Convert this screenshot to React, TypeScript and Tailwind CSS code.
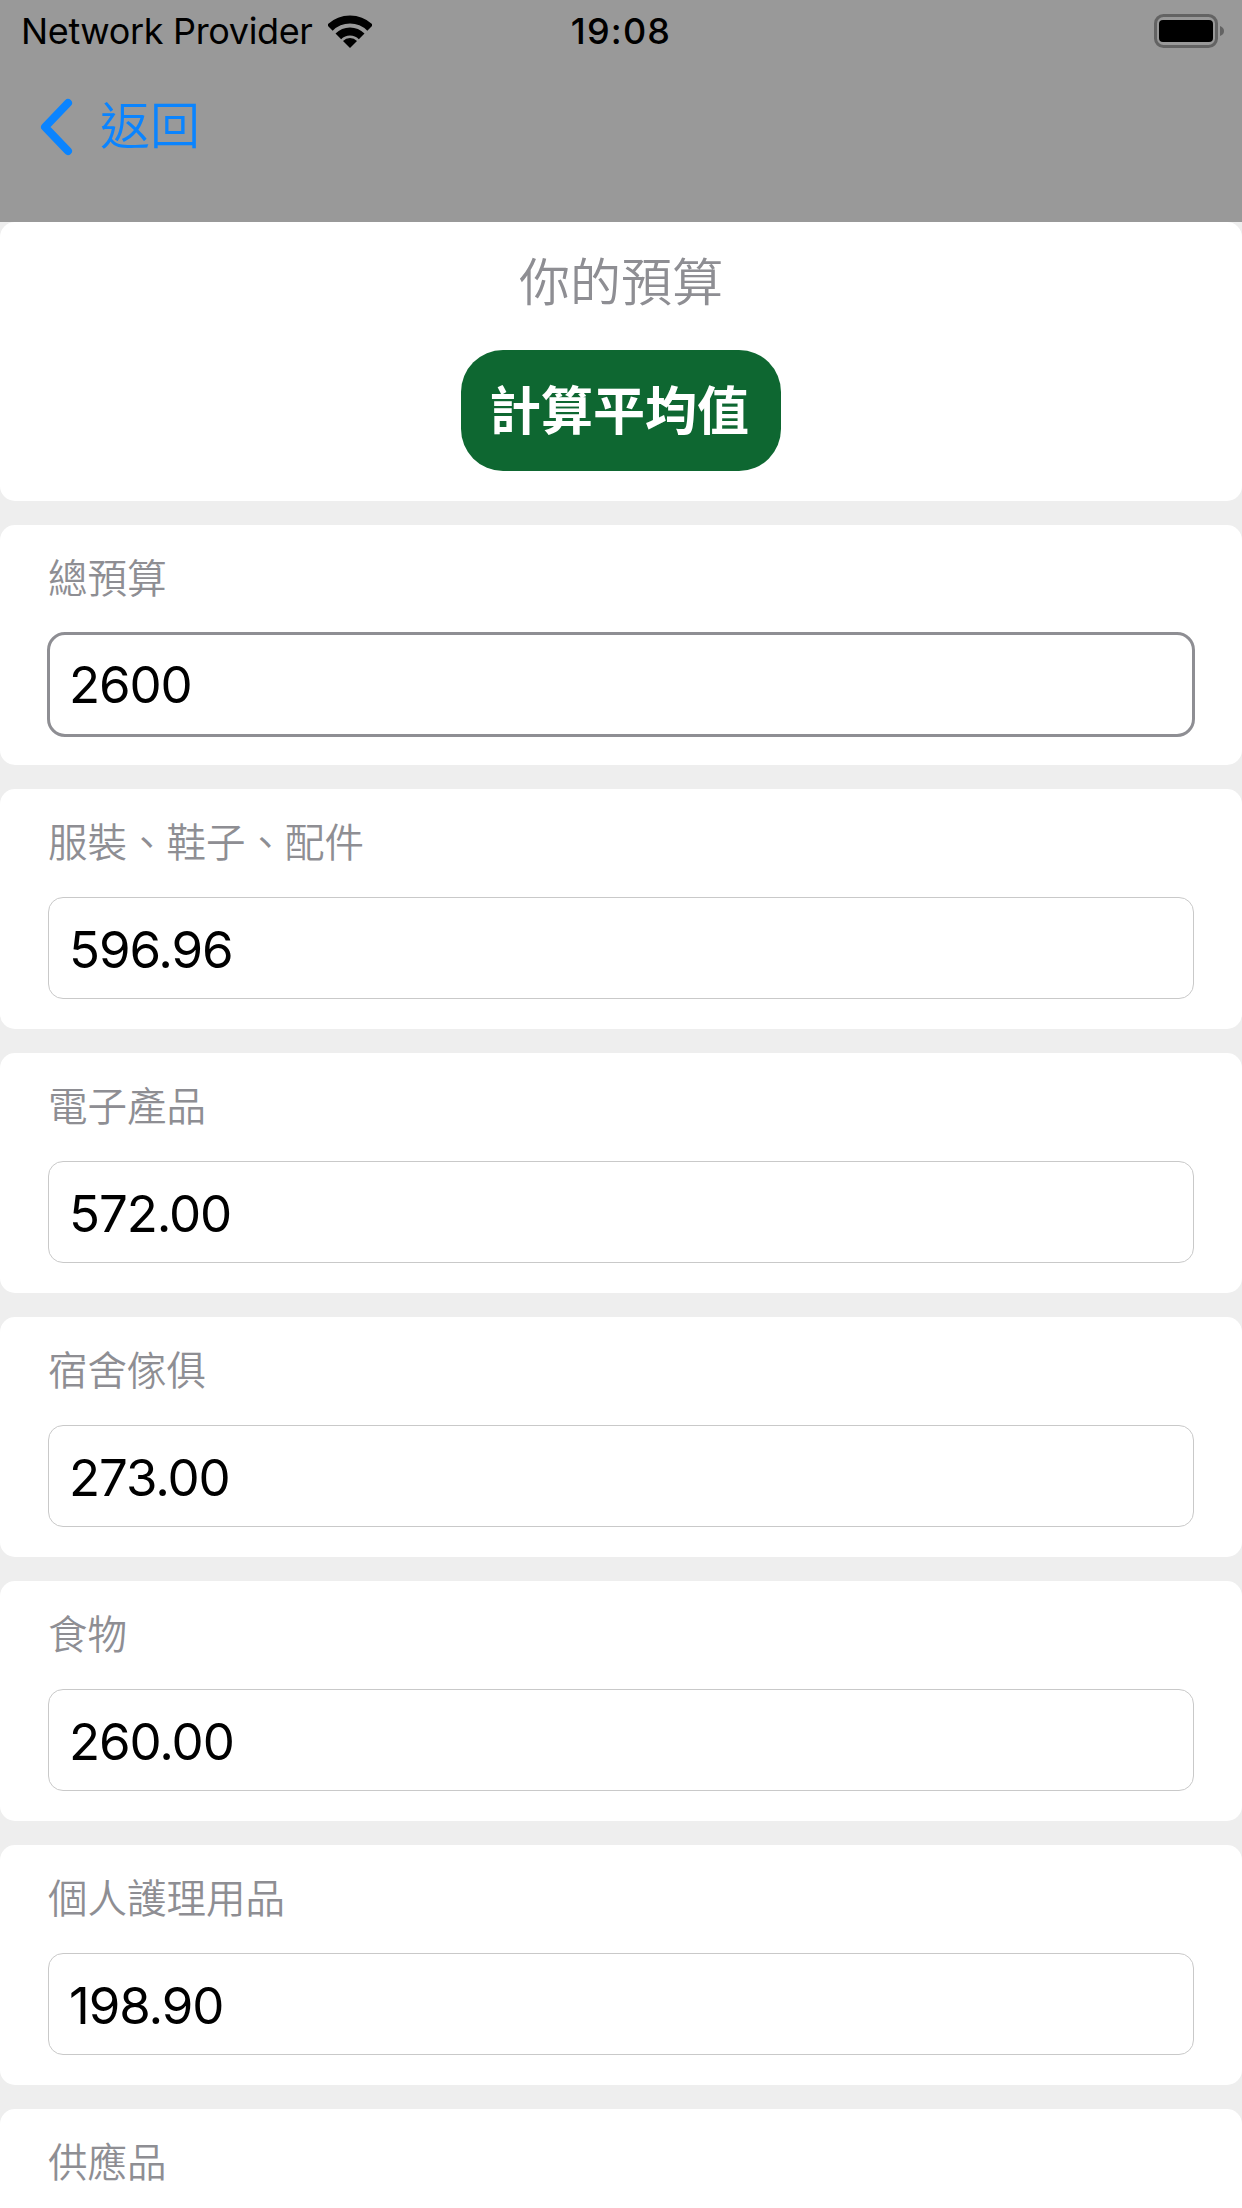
import React from 'react';

const fields = [
    { label: '總預算', value: '2600', focused: true },
    { label: '服裝、鞋子、配件', value: '596.96' },
    { label: '電子產品', value: '572.00' },
    { label: '宿舍傢俱', value: '273.00' },
    { label: '食物', value: '260.00' },
    { label: '個人護理用品', value: '198.90' },
    { label: '供應品', value: '130.00' },
];

const WifiIcon = () => (
    <svg width="44" height="33" viewBox="0 0 44 33" fill="none" className="ml-[15px]">
        <path d="M1.85 12.85A28.5 28.5 0 0 1 42.15 12.85" stroke="#000" strokeWidth="8" />
        <path d="M10.33 21.33A16.5 16.5 0 0 1 33.67 21.33" stroke="#000" strokeWidth="8" />
        <path d="M22 33L15 26A9.9 9.9 0 0 1 29 26Z" fill="#000" />
    </svg>
);

const BatteryIcon = () => (
    <svg width="72" height="34" viewBox="0 0 72 34">
        <rect x="1.5" y="1.5" width="61" height="31" rx="8" fill="none" stroke="#636363" strokeWidth="3" />
        <rect x="5" y="6" width="54" height="22" rx="4" fill="#000" />
        <path d="M66 12C69 13 70 15 70 17C70 19 69 21 66 22Z" fill="#636363" />
    </svg>
);

const Field = ({ label, value, focused }: { label: string; value: string; focused?: boolean }) => (
    <div className="bg-white rounded-[15px] h-[240px] shrink-0 px-[48px] pt-[24px]">
        <div className="h-[60px] leading-[60px] text-[39.5px] font-[350] text-[#8e8e93]">{label}</div>
        <input
            readOnly
            value={value}
            className={
                focused
                    ? "block mt-[23px] -mx-px w-[1148px] h-[105px] border-[3px] border-[#8e8e93] rounded-[18px] pl-[19px] text-[51px] tracking-[-1.1px] text-black outline-none bg-white font-['Inter',sans-serif]"
                    : "block mt-[24px] w-[1146px] h-[102px] border border-[#c9c9c9] rounded-[15px] pl-[20px] pt-[2px] text-[51px] tracking-[-1.1px] text-black outline-none bg-white font-['Inter',sans-serif]"
            }
        />
    </div>
);

export default function App() {
    return (
        <div className="w-[1242px] h-[2208px] overflow-hidden bg-[#eeeeee] flex flex-col font-['Liberation_Sans','Noto_Sans_CJK_TC',sans-serif]">
            <div className="h-[222px] shrink-0 bg-[#999999]">
                <div className="h-[62px] grid grid-cols-3 items-center px-[16px] text-[36px] text-black font-['Inter','Noto_Sans',sans-serif]">
                    <div className="flex items-center pl-[5px]">
                        <span className="whitespace-nowrap tracking-[-0.35px]">Network Provider</span>
                        <WifiIcon />
                    </div>
                    <div className="text-center font-medium tracking-[1.2px]">19:08</div>
                    <div className="flex justify-end">
                        <BatteryIcon />
                    </div>
                </div>
                <div className="flex items-center pl-[38px] pt-[32px]">
                    <svg width="38" height="60" viewBox="0 0 38 60" fill="none">
                        <path d="M30 7L7 31L30 55" stroke="#0a84ff" strokeWidth="8" strokeLinecap="round" strokeLinejoin="round" />
                    </svg>
                    <span className="ml-[24px] mt-[3px] text-[50px] leading-[60px] font-[350] text-[#0a84ff]">返回</span>
                </div>
            </div>

            <div className="flex flex-col gap-[24px]">
                <div className="bg-white rounded-[15px] h-[279px] shrink-0 flex flex-col items-center pt-[27px]">
                    <h1 className="h-[70px] leading-[70px] text-[51px] font-[350] text-[#8e8e93]">你的預算</h1>
                    <button className="mt-[31px] w-[320px] h-[121px] rounded-[42px] bg-[#0e6731] text-white text-[52px] font-bold pt-[2px] pr-[4px]">
                        計算平均值
                    </button>
                </div>
                {fields.map(f => (
                    <Field key={f.label} label={f.label} value={f.value} focused={f.focused} />
                ))}
            </div>
        </div>
    );
}
